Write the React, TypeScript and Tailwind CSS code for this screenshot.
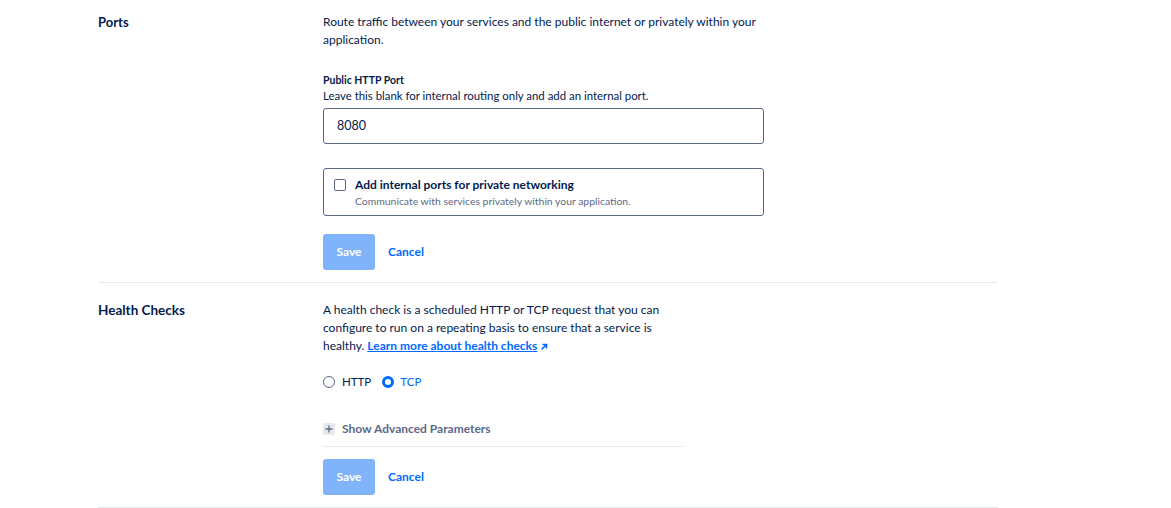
import React from "react";

const font = { fontFamily: "Lato, Roboto, sans-serif" };

function SaveRow() {
  return (
    <div className="flex items-center gap-[13px]">
      <button className="h-[36px] w-[52px] rounded-[3px] bg-[#80b3fa] text-[12px] font-bold text-white">Save</button>
      <button className="text-[12px] font-bold text-[#0069ff]">Cancel</button>
    </div>
  );
}

export default function App() {
  return (
    <div className="min-h-[508px] bg-white text-[#031b4e]" style={font}>
      <div className="ml-[98px] w-[900px]">
        {/* Ports */}
        <section className="flex border-b border-[#e5e8ed] pt-[13px] pb-[12px]">
          <div className="w-[225px] text-[13px] font-bold leading-[18px]">Ports</div>
          <div className="flex w-[441px] flex-col">
            <p className="text-[12px] leading-[18px]">
              Route traffic between your services and the public internet or privately within your application.
            </p>
            <div className="mt-[23px] text-[10.5px] font-bold leading-[16px]">Public HTTP Port</div>
            <div className="text-[11.4px] leading-[16px]">Leave this blank for internal routing only and add an internal port.</div>
            <div className="mt-[4px] flex h-[36px] items-center rounded-[3px] border border-[#5b6987] px-[13px] text-[12.5px]">8080</div>
            <div className="mt-[24px] flex h-[48px] items-start gap-[9px] rounded-[3px] border border-[#5b6987] px-[10px] pt-[7px]">
              <div className="mt-[3px] h-[12px] w-[12px] rounded-[2px] border border-[#5b6987]" />
              <div className="flex flex-col">
                <span className="text-[12px] font-bold leading-[17px]">Add internal ports for private networking</span>
                <span className="text-[10.4px] leading-[16px] text-[#5b6987]">Communicate with services privately within your application.</span>
              </div>
            </div>
            <div className="mt-[18px]">
              <SaveRow />
            </div>
          </div>
        </section>

        {/* Health Checks */}
        <section className="flex border-b border-[#e5e8ed] pt-[18px] pb-[12px]">
          <div className="w-[225px] text-[13.5px] font-bold leading-[18px]">Health Checks</div>
          <div className="flex w-[360px] flex-col">
            <p className="text-[12px] leading-[18px]">
              A health check is a scheduled HTTP or TCP request that you can configure to run on a repeating basis to ensure that a service is healthy.{" "}
              <a className="font-bold text-[#0069ff] underline">Learn more about health checks</a>{" "}
              <svg className="inline-block align-[-1px] text-[#0069ff]" width="8" height="8" viewBox="0 0 8 8" fill="none" stroke="currentColor" strokeWidth="1.6">
                <path d="M1.5 6.5 L6.5 1.5 M2.5 1.5 H6.5 V5.5" />
              </svg>
            </p>
            <div className="mt-[17px] flex h-[20px] items-center text-[11.5px]">
              <div className="h-[12px] w-[12px] rounded-full border border-[#5b6987]" />
              <span className="ml-[7px]">HTTP</span>
              <div className="ml-[11px] h-[12px] w-[12px] rounded-full border-[3px] border-[#0069ff]" />
              <span className="ml-[6px] text-[#0069ff]">TCP</span>
            </div>
            <div className="mt-[27px] flex h-[28px] items-center border-b border-[#e5e8ed] pb-[8px]">
              <div className="flex h-[12px] w-[12px] items-center justify-center rounded-[2px] bg-[#e5e8ed]">
                <svg width="8" height="8" viewBox="0 0 8 8" stroke="#5b6987" strokeWidth="1.3">
                  <path d="M4 0.5 V7.5 M0.5 4 H7.5" />
                </svg>
              </div>
              <span className="ml-[7px] text-[12px] font-bold text-[#5b6987]">Show Advanced Parameters</span>
            </div>
            <div className="mt-[12px]">
              <SaveRow />
            </div>
          </div>
        </section>
      </div>
    </div>
  );
}
